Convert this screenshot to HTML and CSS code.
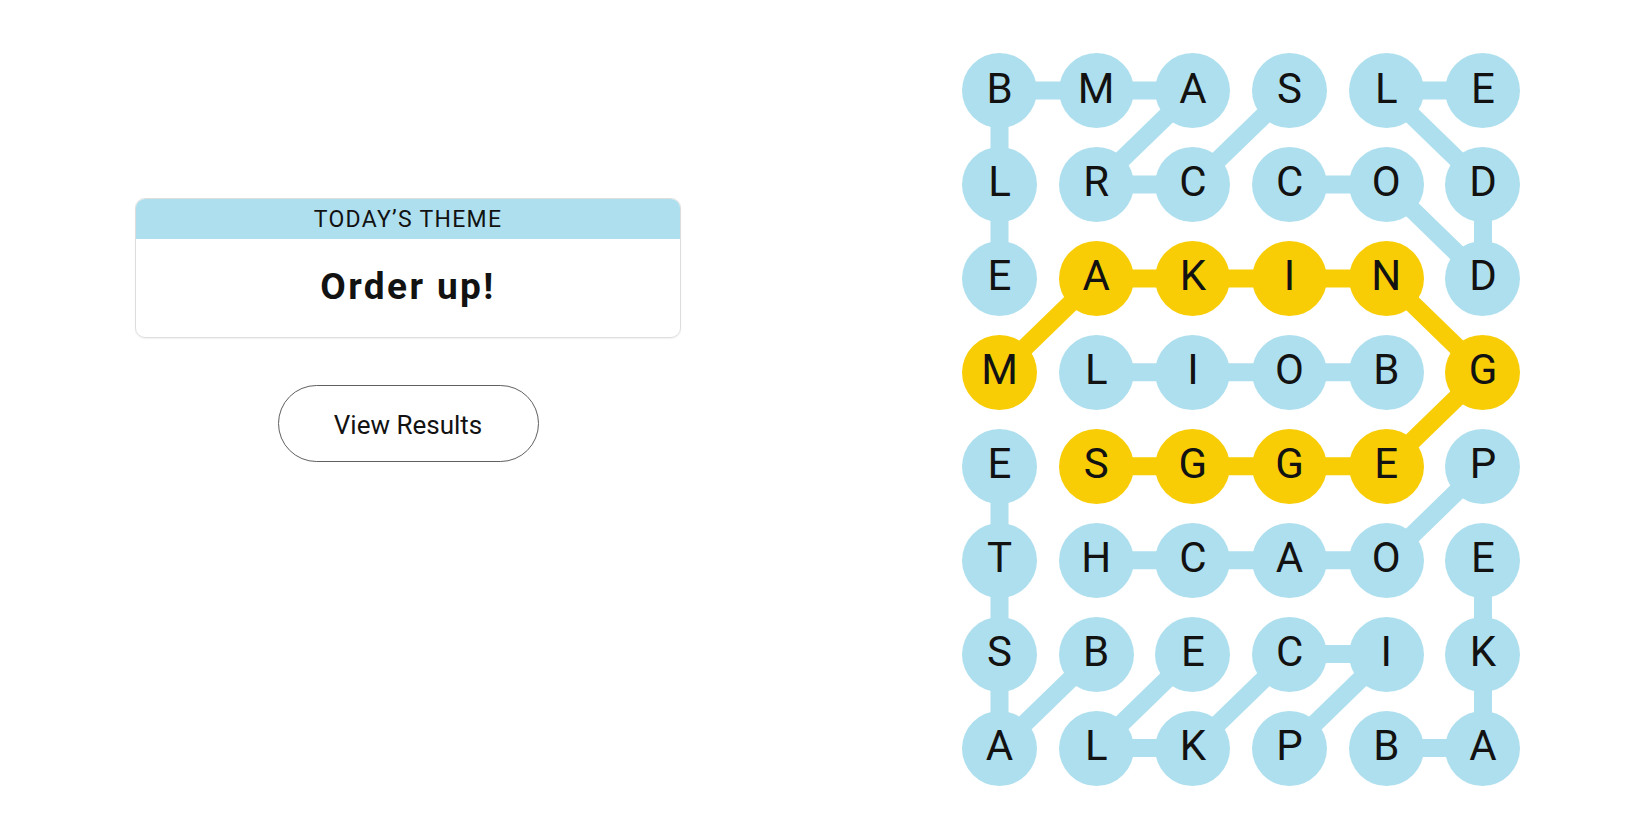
FILE: index.html
```html
<!DOCTYPE html>
<html lang="en">
<head>
<meta charset="utf-8">
<title>Strands</title>
<link rel="stylesheet" href="styles.css">
</head>
<body>
<main class="page">
  <section class="info">
    <div class="theme-card">
      <div class="theme-head">Today’s Theme</div>
      <div class="theme-body">Order up!</div>
    </div>
    <button class="results-btn" type="button">View Results</button>
  </section>
  <section class="board-wrap">
    <div class="board">
      <svg class="links" width="559" height="733" viewBox="0 0 559 733" aria-hidden="true">
        <g class="blue-links">
          <polyline points="327.6,37.5 230.9,131.4 134.2,131.4 230.9,37.5 134.2,37.5 37.5,37.5 37.5,131.4 37.5,225.4"/>
          <polyline points="327.6,131.4 424.3,131.4 521,225.4 521,131.4 424.3,37.5 521,37.5"/>
          <polyline points="424.3,319.3 327.6,319.3 230.9,319.3 134.2,319.3"/>
          <polyline points="134.2,601.1 37.5,695.1 37.5,601.1 37.5,507.2 37.5,413.3"/>
          <polyline points="521,413.3 424.3,507.2 327.6,507.2 230.9,507.2 134.2,507.2"/>
          <polyline points="424.3,695.1 521,695.1 521,601.1 521,507.2"/>
          <polyline points="327.6,695.1 424.3,601.1 327.6,601.1 230.9,695.1 134.2,695.1 230.9,601.1"/>
        </g>
        <g class="gold-links">
          <polyline points="37.5,319.3 134.2,225.4 230.9,225.4 327.6,225.4 424.3,225.4 521,319.3 424.3,413.3 327.6,413.3 230.9,413.3 134.2,413.3"/>
        </g>
      </svg>
      <div class="cell">B</div><div class="cell">M</div><div class="cell">A</div><div class="cell">S</div><div class="cell">L</div><div class="cell">E</div>
      <div class="cell">L</div><div class="cell">R</div><div class="cell">C</div><div class="cell">C</div><div class="cell">O</div><div class="cell">D</div>
      <div class="cell">E</div><div class="cell gold">A</div><div class="cell gold">K</div><div class="cell gold">I</div><div class="cell gold">N</div><div class="cell">D</div>
      <div class="cell gold">M</div><div class="cell">L</div><div class="cell">I</div><div class="cell">O</div><div class="cell">B</div><div class="cell gold">G</div>
      <div class="cell">E</div><div class="cell gold">S</div><div class="cell gold">G</div><div class="cell gold">G</div><div class="cell gold">E</div><div class="cell">P</div>
      <div class="cell">T</div><div class="cell">H</div><div class="cell">C</div><div class="cell">A</div><div class="cell">O</div><div class="cell">E</div>
      <div class="cell">S</div><div class="cell">B</div><div class="cell">E</div><div class="cell">C</div><div class="cell">I</div><div class="cell">K</div>
      <div class="cell">A</div><div class="cell">L</div><div class="cell">K</div><div class="cell">P</div><div class="cell">B</div><div class="cell">A</div>
    </div>
  </section>
</main>
</body>
</html>
```
FILE: styles.css
```css
* { box-sizing: border-box; }

html, body {
  margin: 0;
  padding: 0;
  background: #ffffff;
}

body {
  font-family: Roboto, "Liberation Sans", Arial, sans-serif;
  color: #121212;
  width: 1650px;
  height: 825px;
  overflow: hidden;
}

.page {
  display: flex;
  align-items: flex-start;
}

.info {
  flex: 0 0 816px;
  padding-top: 198px;
  display: flex;
  flex-direction: column;
  align-items: center;
}

.theme-card {
  width: 546px;
  border: 1px solid #dedede;
  border-radius: 10px;
  overflow: hidden;
  box-shadow: 0 1px 2px rgba(0, 0, 0, 0.06);
}

.theme-head {
  height: 40px;
  line-height: 40px;
  padding-top: 1px;
  background: #aedfee;
  text-align: center;
  text-transform: uppercase;
  font-size: 23px;
  font-weight: 400;
  letter-spacing: 1.3px;
  color: #121212;
}

.theme-body {
  height: 98px;
  padding-top: 27px;
  text-align: center;
  font-size: 37px;
  font-weight: 700;
  letter-spacing: 2.4px;
  line-height: 42px;
  color: #121212;
}

.results-btn {
  margin-top: 47px;
  width: 261px;
  height: 77px;
  border: 1px solid #5f5f5f;
  border-radius: 39px;
  background: #ffffff;
  font-family: Roboto, "Liberation Sans", Arial, sans-serif;
  font-size: 26px;
  font-weight: 400;
  color: #121212;
  padding: 3px 0 0 0;
}

.board-wrap {
  margin-left: 146px;
  padding-top: 53px;
}

.board {
  position: relative;
  display: grid;
  grid-template-columns: repeat(6, 75px);
  grid-auto-rows: 75px;
  column-gap: 21.7px;
  row-gap: 18.94px;
}

.links {
  position: absolute;
  left: 0;
  top: 0;
  z-index: 0;
}

.links polyline {
  fill: none;
  stroke-width: 18;
  stroke-linejoin: round;
  stroke-linecap: butt;
}

.blue-links polyline { stroke: #aedfee; }
.gold-links polyline { stroke: #f8cd05; }

.cell {
  position: relative;
  z-index: 1;
  width: 75px;
  height: 75px;
  border-radius: 50%;
  background: #aedfee;
  display: flex;
  align-items: center;
  justify-content: center;
  font-size: 42px;
  font-weight: 400;
  color: #121212;
  padding-bottom: 5px;
}

.cell.gold {
  background: #f8cd05;
}
```
